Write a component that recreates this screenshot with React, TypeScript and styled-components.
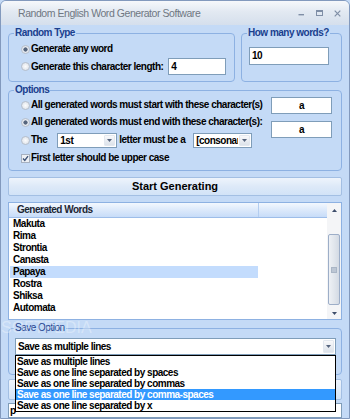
import React from "react";
import styled, { createGlobalStyle } from "styled-components";

const BODY = "#c4daf6";
const GROUP_BORDER = "#8db1e2";
const LEGEND = "#1a3f8e";
const FIELD_BORDER = "#7f9db9";

const GlobalStyle = createGlobalStyle`
  html, body { margin: 0; padding: 0; background: ${BODY}; }
  * { box-sizing: border-box; }
  body { font-family: "Liberation Sans", Arial, sans-serif; }
`;

const Window = styled.div`
  position: relative;
  width: 350px;
  height: 419px;
  border: 1px solid #8299bd;
  border-radius: 6px 6px 0 0;
  background: ${BODY};
  display: flex;
  flex-direction: column;
  overflow: hidden;
  font: bold 10px/12px "Liberation Sans", Arial, sans-serif;
  letter-spacing: -0.5px;
  color: #000;
`;

const TitleBar = styled.div`
  flex: none;
  height: 24px;
  display: flex;
  align-items: center;
  padding: 0 8px 0 17px;
  background: linear-gradient(#f6f8fb, #e2e9f2 45%, #d5dfec);
  color: #6f7782;
  font: 400 10.5px/12px "Liberation Sans", Arial, sans-serif;
  letter-spacing: -0.45px;
`;

const Title = styled.span`
  flex: 1;
`;

const Controls = styled.div`
  display: flex;
  align-items: center;
  gap: 11px;
`;

const CtlIcon = styled.svg`
  display: block;
  color: #7f8ea6;
`;

const Body = styled.div`
  flex: 1;
  display: flex;
  flex-direction: column;
  padding: 2px 7px 0;
`;

const TopRow = styled.div`
  display: flex;
  gap: 6px;
`;

const Group = styled.fieldset<{ $w?: number; $mt?: number }>`
  margin: ${(p) => p.$mt ?? 0}px 0 0;
  padding: 0;
  min-width: 0;
  border: 1px solid ${GROUP_BORDER};
  border-radius: 4px;
  ${(p) => (p.$w ? `width: ${p.$w}px; flex: none;` : `flex: 1;`)}
`;

const Legend = styled.legend<{ $plain?: boolean }>`
  margin-left: 5px;
  padding: 0 1px;
  color: ${LEGEND};
  font-weight: ${(p) => (p.$plain ? 400 : 700)};
  line-height: 12px;
`;

const GroupBody = styled.div<{ $pad: string; $gap?: number }>`
  display: flex;
  flex-direction: column;
  gap: ${(p) => p.$gap ?? 0}px;
  padding: ${(p) => p.$pad};
`;

const Row = styled.div<{ $h?: number }>`
  display: flex;
  align-items: center;
  height: ${(p) => p.$h ?? 14}px;
  white-space: nowrap;
`;

const Radio = styled.span<{ $on?: boolean }>`
  flex: none;
  width: 9px;
  height: 9px;
  margin-right: 1px;
  border-radius: 50%;
  border: 1px solid #b6bfcb;
  background: ${(p) =>
    p.$on
      ? "radial-gradient(circle, #56667e 0 1.8px, #e6eaf0 2.4px)"
      : "radial-gradient(circle, #fbfcfd, #d9dee6)"};
`;

const CheckIcon = styled.svg`
  flex: none;
  display: block;
  margin-right: 1px;
`;

const Field = styled.div<{ $w: number; $h: number; $center?: boolean; $ml?: number }>`
  flex: none;
  width: ${(p) => p.$w}px;
  height: ${(p) => p.$h}px;
  margin-left: ${(p) => p.$ml ?? 0}px;
  background: #fff;
  border: 1px solid ${FIELD_BORDER};
  padding-left: ${(p) => (p.$center ? 0 : 2)}px;
  line-height: ${(p) => p.$h - 2}px;
  text-align: ${(p) => (p.$center ? "center" : "left")};
  overflow: hidden;
  white-space: nowrap;
`;

const Select = styled.div<{ $w?: number; $h: number; $ml?: number }>`
  display: flex;
  flex: ${(p) => (p.$w ? "none" : "1")};
  width: ${(p) => (p.$w ? `${p.$w}px` : "auto")};
  height: ${(p) => p.$h}px;
  margin-left: ${(p) => p.$ml ?? 0}px;
  background: #fff;
  border: 1px solid ${FIELD_BORDER};
`;

const SelectText = styled.span<{ $h: number }>`
  flex: 1;
  min-width: 0;
  overflow: hidden;
  white-space: nowrap;
  padding-left: 2px;
  line-height: ${(p) => p.$h - 2}px;
`;

const DropBtn = styled.span`
  flex: none;
  width: 11px;
  margin: 1px;
  border: 1px solid #e3e8ef;
  border-radius: 1px;
  background: linear-gradient(#f8f9fb, #dce2ea);
  display: flex;
  align-items: center;
  justify-content: center;
`;

const Arrow = ({ up, color = "#56657e" }: { up?: boolean; color?: string }) => (
  <svg width="5" height="3" viewBox="0 0 5 3" style={{ display: "block" }}>
    <path d={up ? "M0 3 L2.5 0 L5 3 Z" : "M0 0 L5 0 L2.5 3 Z"} fill={color} />
  </svg>
);

const OptionsBody = styled.div`
  display: flex;
  justify-content: space-between;
  padding: 0 9px 5px 12px;
`;

const OptCol = styled.div<{ $pt: number; $gap: number }>`
  display: flex;
  flex-direction: column;
  padding-top: ${(p) => p.$pt}px;
  gap: ${(p) => p.$gap}px;
`;

const Label = styled.span<{ $ml?: number }>`
  margin-left: ${(p) => p.$ml ?? 0}px;
`;

const StartButton = styled.button`
  flex: none;
  margin-top: 6px;
  height: 19px;
  padding: 0;
  border: 1px solid #a3bfe3;
  border-radius: 2px;
  background: linear-gradient(#eef4fc, #dde9f8 50%, #d2e3f7);
  font: bold 11px/17px "Liberation Sans", Arial, sans-serif;
  letter-spacing: 0;
  color: #000;
`;

const List = styled.div`
  flex: none;
  margin-top: 6px;
  height: 118px;
  display: flex;
  background: #fff;
  border: 1px solid ${GROUP_BORDER};
`;

const ListMain = styled.div`
  flex: 1;
  min-width: 0;
  display: flex;
  flex-direction: column;
`;

const ListHeader = styled.div`
  flex: none;
  height: 15px;
  display: flex;
  background: linear-gradient(#f3f8fe, #dce9fb 50%, #c7dcf8);
  border-bottom: 1px solid #9dbde9;
`;

const HeaderCell = styled.div<{ $w?: number }>`
  ${(p) => (p.$w ? `width: ${p.$w}px; flex: none; border-right: 1px solid #b3cdf0;` : "flex: 1;")}
  padding-left: 8px;
  line-height: 14px;
  color: #1d2633;
`;

const Item = styled.div<{ $sel?: boolean }>`
  width: 248px;
  margin-left: 1px;
  height: 12px;
  line-height: 12px;
  padding-left: 3px;
  background: ${(p) => (p.$sel ? "#c3dcfd" : "transparent")};
`;

const ScrollBar = styled.div`
  flex: none;
  width: 14px;
  display: flex;
  flex-direction: column;
  background: #f4f5f7;
`;

const ScrollBtn = styled.div<{ $h: number }>`
  flex: none;
  height: ${(p) => p.$h}px;
  display: flex;
  align-items: center;
  justify-content: center;
`;

const Track = styled.div`
  flex: 1;
  padding: 16px 1px 0 1px;
`;

const Thumb = styled.div`
  height: 71px;
  border: 1px solid #9daec8;
  border-radius: 2px;
  background: linear-gradient(90deg, #eef1f5, #dfe4eb 60%, #d3dae4);
  display: flex;
  align-items: center;
  justify-content: center;
`;

const Grip = styled.div`
  width: 6px;
  height: 6px;
  background: #bcc6d4;
  border: 1px solid #aab6c6;
`;

const SaveBody = styled.div`
  padding: 4px 5px 5px 6px;
`;

const SelectWrap = styled.div`
  position: relative;
  display: flex;
`;

const DropList = styled.div`
  position: absolute;
  top: 100%;
  left: 0;
  right: 0;
  z-index: 5;
  background: #fff;
  border: 1px solid #000;
`;

const DropItem = styled.div<{ $sel?: boolean }>`
  height: 11px;
  line-height: 11px;
  padding-left: 1px;
  white-space: nowrap;
  background: ${(p) => (p.$sel ? "#3399ff" : "#fff")};
  color: ${(p) => (p.$sel ? "#fff" : "#000")};
`;

const BgButton = styled.div`
  flex: none;
  margin-top: 4px;
  height: 21px;
  border: 1px solid #a3bfe3;
  border-radius: 2px;
  background: linear-gradient(#eef4fc, #d2e3f7);
`;

const BgInput = styled.div`
  flex: none;
  margin-top: 3px;
  height: 15px;
  background: #fff;
  border: 1px solid ${FIELD_BORDER};
  padding-left: 1px;
  line-height: 13px;
  overflow: hidden;
  white-space: nowrap;
`;

const Watermark = styled.div`
  position: absolute;
  left: 0;
  top: 318px;
  font: 400 16px/18px "Liberation Sans", Arial, sans-serif;
  letter-spacing: 0;
  color: rgba(255, 255, 255, 0.32);
  pointer-events: none;
  z-index: 6;
`;

const words = ["Makuta", "Rima", "Strontia", "Canasta", "Papaya", "Rostra", "Shiksa", "Automata"];
const saveOptions = [
  "Save as multiple lines",
  "Save as one line separated by spaces",
  "Save as one line separated by commas",
  "Save as one line separated by comma-spaces",
  "Save as one line separated by x",
];

const Check = () => (
  <CheckIcon width="9" height="9" viewBox="0 0 9 9">
    <rect x="0.5" y="0.5" width="8" height="8" fill="#eef1f5" stroke="#a6b1c1" />
    <path d="M2 4.5 L3.8 6.4 L7 2.2" fill="none" stroke="#3f5478" strokeWidth="1.4" />
  </CheckIcon>
);

export default function App() {
  return (
    <>
      <GlobalStyle />
      <Window>
        <TitleBar>
          <Title>Random English Word Generator Software</Title>
          <Controls>
            <CtlIcon width="7" height="7" viewBox="0 0 7 7">
              <rect x="0.5" y="4" width="5.5" height="1.4" fill="currentColor" />
            </CtlIcon>
            <CtlIcon width="7" height="7" viewBox="0 0 7 7">
              <rect x="0.5" y="0.5" width="6" height="5" fill="none" stroke="currentColor" />
              <rect x="0.5" y="0.5" width="6" height="1.5" fill="currentColor" />
            </CtlIcon>
            <CtlIcon width="7" height="7" viewBox="0 0 7 7">
              <path d="M0.7 0.7 L6.3 6.3 M6.3 0.7 L0.7 6.3" stroke="currentColor" strokeWidth="1.2" />
            </CtlIcon>
          </Controls>
        </TitleBar>
        <Body>
          <TopRow>
            <Group $w={227}>
              <Legend>Random Type</Legend>
              <GroupBody $pad="3px 0 6px 12px" $gap={2}>
                <Row>
                  <Radio $on />
                  <Label>Generate any word</Label>
                </Row>
                <Row $h={17}>
                  <Radio />
                  <Label>Generate this character length:</Label>
                  <Field $w={58} $h={17} $ml={5}>4</Field>
                </Row>
              </GroupBody>
            </Group>
            <Group>
              <Legend>How many words?</Legend>
              <GroupBody $pad="8px 0 0 7px">
                <Field $w={80} $h={18}>10</Field>
              </GroupBody>
            </Group>
          </TopRow>

          <Group $mt={2}>
            <Legend>Options</Legend>
            <OptionsBody>
              <OptCol $pt={2} $gap={3}>
                <Row>
                  <Radio />
                  <Label>All generated words must start with these character(s)</Label>
                </Row>
                <Row>
                  <Radio $on />
                  <Label>All generated words must end with these character(s):</Label>
                </Row>
                <Row $h={16}>
                  <Radio />
                  <Label>The</Label>
                  <Select $w={60} $h={15} $ml={10}>
                    <SelectText $h={15}>1st</SelectText>
                    <DropBtn>
                      <Arrow />
                    </DropBtn>
                  </Select>
                  <Label $ml={2}>letter must be a</Label>
                  <Select $w={59} $h={15} $ml={8}>
                    <SelectText $h={15}>[consonant]</SelectText>
                    <DropBtn>
                      <Arrow />
                    </DropBtn>
                  </Select>
                </Row>
                <Row>
                  <Check />
                  <Label>First letter should be upper case</Label>
                </Row>
              </OptCol>
              <OptCol $pt={1} $gap={7}>
                <Field $w={61} $h={17} $center>a</Field>
                <Field $w={61} $h={17} $center>a</Field>
              </OptCol>
            </OptionsBody>
          </Group>

          <StartButton>Start Generating</StartButton>

          <List>
            <ListMain>
              <ListHeader>
                <HeaderCell $w={250}>Generated Words</HeaderCell>
                <HeaderCell />
              </ListHeader>
              {words.map((w) => (
                <Item key={w} $sel={w === "Papaya"}>
                  {w}
                </Item>
              ))}
            </ListMain>
            <ScrollBar>
              <ScrollBtn $h={15}>
                <Arrow up color="#3d4d6a" />
              </ScrollBtn>
              <Track>
                <Thumb>
                  <Grip />
                </Thumb>
              </Track>
              <ScrollBtn $h={12}>
                <Arrow color="#3d4d6a" />
              </ScrollBtn>
            </ScrollBar>
          </List>

          <Group $mt={2}>
            <Legend $plain>Save Option</Legend>
            <SaveBody>
              <SelectWrap>
                <Select $h={17}>
                  <SelectText $h={17}>Save as multiple lines</SelectText>
                  <DropBtn>
                    <Arrow />
                  </DropBtn>
                </Select>
                <DropList>
                  {saveOptions.map((o, i) => (
                    <DropItem key={o} $sel={i === 3}>
                      {o}
                    </DropItem>
                  ))}
                </DropList>
              </SelectWrap>
            </SaveBody>
          </Group>

          <BgButton />
          <BgInput>p</BgInput>
        </Body>
        <Watermark>SOFTPEDIA</Watermark>
      </Window>
    </>
  );
}
